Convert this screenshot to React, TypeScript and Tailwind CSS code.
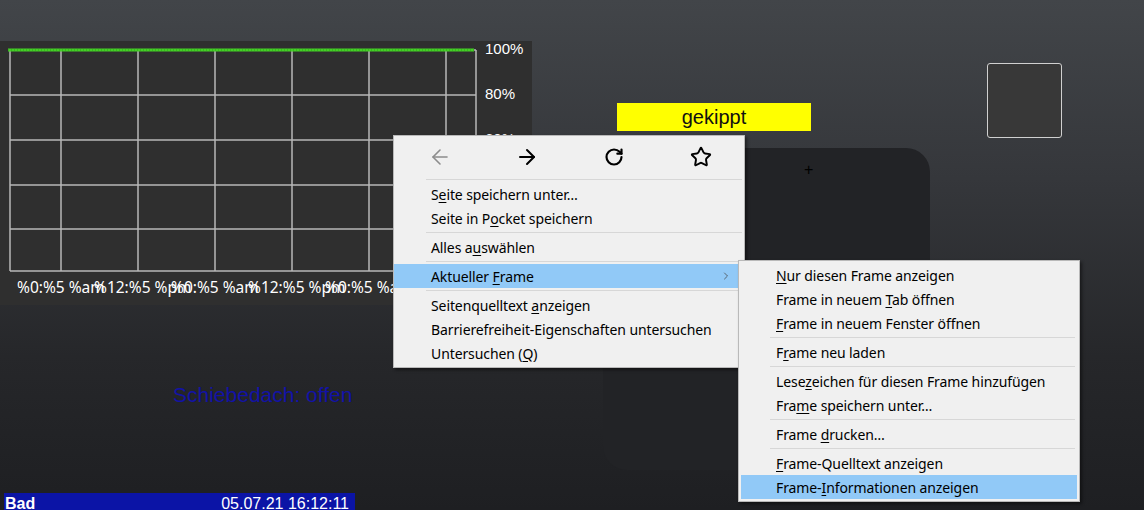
import { ArrowLeft, ArrowRight, RotateCw, Star, ChevronRight } from "lucide-react"

type Item = { pre: string; key: string; post: string; active?: boolean; sub?: boolean }
type Entry = Item | "sep"

const mainMenu: Entry[] = [
  { pre: "S", key: "e", post: "ite speichern unter…" },
  { pre: "Seite in P", key: "o", post: "cket speichern" },
  "sep",
  { pre: "Alles a", key: "u", post: "swählen" },
  "sep",
  { pre: "Aktueller ", key: "F", post: "rame", active: true, sub: true },
  "sep",
  { pre: "Seitenquelltext ", key: "a", post: "nzeigen" },
  { pre: "Barrierefreiheit-Eigenschaften untersuchen", key: "", post: "" },
  { pre: "Untersuchen (", key: "Q", post: ")" },
]

const frameMenu: Entry[] = [
  { pre: "", key: "N", post: "ur diesen Frame anzeigen" },
  { pre: "Frame in neuem ", key: "T", post: "ab öffnen" },
  { pre: "", key: "F", post: "rame in neuem Fenster öffnen" },
  "sep",
  { pre: "F", key: "r", post: "ame neu laden" },
  "sep",
  { pre: "Lese", key: "z", post: "eichen für diesen Frame hinzufügen" },
  { pre: "Fra", key: "m", post: "e speichern unter…" },
  "sep",
  { pre: "Frame ", key: "d", post: "rucken…" },
  "sep",
  { pre: "", key: "F", post: "rame-Quelltext anzeigen" },
  { pre: "Frame-", key: "I", post: "nformationen anzeigen", active: true },
]

function MenuList({ entries, sepInset, textInset }: { entries: Entry[]; sepInset: string; textInset: string }) {
  return (
    <>
      {entries.map((e, i) =>
        e === "sep" ? (
          <div key={i} className={`h-[5px] flex items-center ${sepInset} pr-[2px]`}>
            <div className="h-px w-full bg-[#d7d7d7]" />
          </div>
        ) : (
          <div
            key={i}
            className={`h-6 flex items-center ${textInset} pr-3 whitespace-nowrap ${e.active ? "bg-[#91c9f7]" : ""}`}
          >
            <span className="flex-1 tracking-[-0.1px]">
              {e.pre}
              {e.key && <u className="underline-offset-2">{e.key}</u>}
              {e.post}
            </span>
            {e.sub && <ChevronRight className="w-3 h-3 text-[#444]" strokeWidth={1.5} />}
          </div>
        )
      )}
    </>
  )
}

function Chart() {
  const vx = [10, 61, 138, 215, 292, 369, 446, 476]
  const hy = [50, 95, 140, 185, 229, 271]
  const labels = ["%0:%5 %am", "%12:%5 %pm", "%0:%5 %am", "%12:%5 %pm", "%0:%5 %am", "%12:%5 %pm"]
  return (
    <svg width="532" height="264" viewBox="0 41 532 264" className="block">
      {vx.map((x) => (
        <line key={x} x1={x} y1={50} x2={x} y2={271} stroke="#b8b8b8" strokeWidth="1.5" />
      ))}
      {hy.map((y) => (
        <line key={y} x1={10} y1={y} x2={476} y2={y} stroke="#b8b8b8" strokeWidth="1.5" />
      ))}
      <line x1={8} y1={50} x2={474} y2={50} stroke="#44d026" strokeWidth="3" />
      <line x1={8} y1={50} x2={474} y2={50} stroke="#2fa218" strokeWidth="1" strokeDasharray="1 2" />
      <g fill="#ffffff" fontFamily="'Liberation Sans', Arial, sans-serif" fontSize="15">
        <text x="485" y="54">100%</text>
        <text x="485" y="99">80%</text>
        <text x="485" y="144">60%</text>
      </g>
      <g fill="#ffffff" fontFamily="'Noto Sans', sans-serif" fontSize="15.5">
        {labels.map((l, i) => (
          <text key={i} x={17 + i * 77} y="293">
            {l}
          </text>
        ))}
      </g>
    </svg>
  )
}

export default function App() {
  return (
    <div className="relative w-[1144px] h-[510px] overflow-hidden bg-[linear-gradient(180deg,#424549_0%,#35373b_35%,#26272a_70%,#1e1f22_100%)] font-['Liberation_Sans',Arial,sans-serif]">
      {/* chart widget */}
      <div className="absolute left-0 top-[41px] w-[532px] h-[264px] bg-[#2f2f2f]">
        <Chart />
      </div>

      {/* status widgets */}
      <div className="absolute left-[617px] top-[103px] w-[194px] h-[28px] bg-[#ffff00] flex items-center justify-center text-[20px] text-[#111]">
        gekippt
      </div>

      <div className="absolute left-[603px] top-[148px] w-[327px] h-[322px] rounded-[24px] bg-[#222326]">
        <div className="absolute left-[201px] top-[14px] text-[16px] text-black leading-none">+</div>
      </div>

      <div className="absolute left-[987px] top-[63px] w-[75px] h-[75px] rounded-[3px] border border-[#d0d0d0] bg-[#383838]" />

      <div className="absolute left-[173px] top-[379px] text-[21px] text-[#1212a6]">Schiebedach: offen</div>

      <div className="absolute left-[4px] top-[493px] w-[351px] h-[24px] bg-[#0b14a6] flex justify-between px-[1px] pt-[3px] text-[16px] text-white leading-none">
        <span className="font-bold">Bad</span>
        <span className="pr-[5px]">05.07.21 16:12:11</span>
      </div>

      {/* context menu */}
      <div className="absolute left-[393px] top-[135px] w-[352px] bg-[#f0f0f0] border border-[#b9b9b9] shadow-[2px_2px_3px_rgba(0,0,0,0.45)] pb-[2px] font-['Noto_Sans',sans-serif] text-[14px] text-black">
        <div className="h-[41px] flex items-center pl-[2px]">
          <div className="w-[87px] flex justify-center">
            <ArrowLeft className="w-6 h-6 text-[#8c8c8c]" strokeWidth={1.6} />
          </div>
          <div className="w-[87px] flex justify-center">
            <ArrowRight className="w-6 h-6 text-black" strokeWidth={2} />
          </div>
          <div className="w-[87px] flex justify-center">
            <RotateCw className="w-5 h-5 text-black" strokeWidth={2.6} />
          </div>
          <div className="w-[87px] flex justify-center">
            <Star className="w-[22px] h-[22px] text-black" strokeWidth={2.1} />
          </div>
        </div>
        <div className="h-[5px] flex items-center pl-[32px] pr-[2px]">
          <div className="h-px w-full bg-[#d7d7d7]" />
        </div>
        <MenuList entries={mainMenu} sepInset="pl-[32px]" textInset="pl-[37px]" />
      </div>

      {/* submenu */}
      <div className="absolute left-[738px] top-[260px] w-[342px] bg-[#f0f0f0] border border-[#b9b9b9] shadow-[2px_2px_3px_rgba(0,0,0,0.45)] pt-[2px] pb-[2px] px-[2px] font-['Noto_Sans',sans-serif] text-[14px] text-black">
        <MenuList entries={frameMenu} sepInset="pl-[29px]" textInset="pl-[35px]" />
      </div>
    </div>
  )
}
